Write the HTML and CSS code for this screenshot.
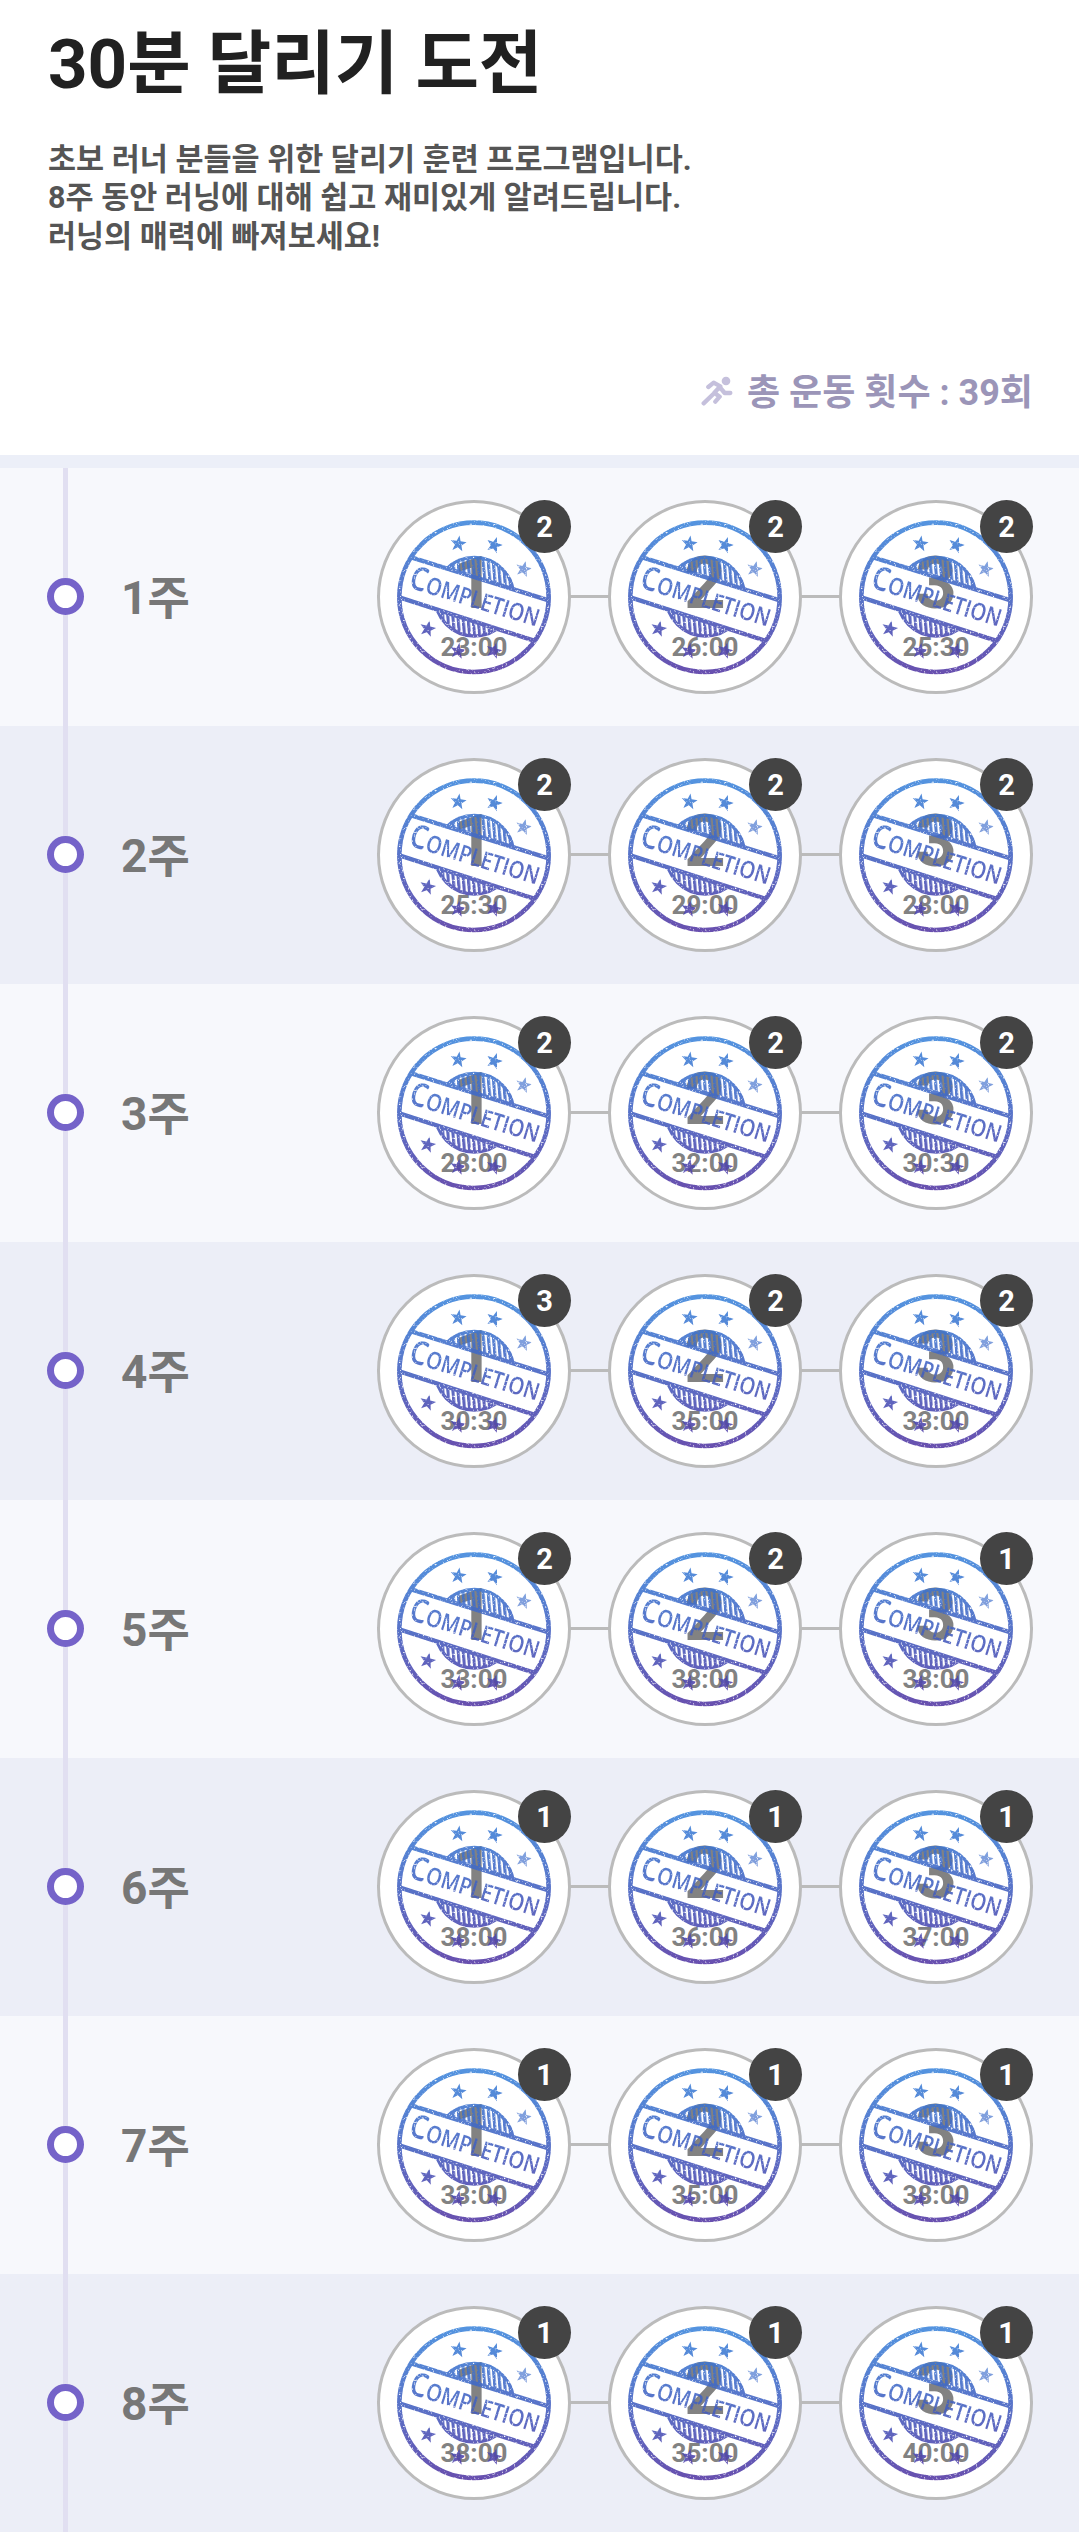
FILE: index.html
```
<!DOCTYPE html>
<html lang="ko">
<head>
    <meta charset="UTF-8">
    <meta name="viewport" content="width=device-width, initial-scale=1.0">
    <title>30분 달리기 도전</title>
    <link rel="stylesheet" href="styles.css">
</head>
<body>

    <svg class="defs" width="0" height="0" aria-hidden="true">
        <defs>
            <linearGradient id="ink" gradientUnits="userSpaceOnUse" x1="0" y1="92" x2="0" y2="552">
                <stop offset="0" stop-color="#3c86dc"/>
                <stop offset="0.45" stop-color="#4064c4"/>
                <stop offset="1" stop-color="#5438a4"/>
            </linearGradient>
            <pattern id="hatch" width="15" height="40" patternUnits="userSpaceOnUse" patternTransform="rotate(-5)">
                <rect width="9" height="40" fill="#fff"/>
            </pattern>
            <clipPath id="outsideBand">
                <path d="M0 0H660V369L130 203L0 162ZM0 294L88 322L660 507V660H0Z"/>
            </clipPath>
            <filter id="worn" x="0" y="0" width="100%" height="100%">
                <feTurbulence type="fractalNoise" baseFrequency="0.16" numOctaves="3" seed="8" result="noise"/>
                <feColorMatrix in="noise" type="matrix" values="0 0 0 0 0  0 0 0 0 0  0 0 0 0 0  0 0 0 4 -0.6" result="spots"/>
                <feComposite in="SourceGraphic" in2="spots" operator="in"/>
            </filter>
            <polygon id="star" points="0,-25 6,-8 24,-8 10,4 15,21 0,11 -15,21 -10,4 -24,-8 -6,-8"/>
            <mask id="stampShape" maskUnits="userSpaceOnUse" x="21" y="30" width="582" height="582">
                <g fill="#fff">
                    <circle cx="312" cy="322" r="224" fill="none" stroke="#fff" stroke-width="14"/>
                    <g clip-path="url(#outsideBand)">
                        <circle cx="313" cy="320" r="118" fill="url(#hatch)"/>
                        <circle cx="313" cy="320" r="118" fill="none" stroke="#fff" stroke-width="10"/>
                    </g>
                    <path d="M126 203L536 331M88 322L492 452" fill="none" stroke="#fff" stroke-width="13"/>
                    <use href="#star" transform="translate(265 161) rotate(8)"/>
                    <use href="#star" transform="translate(373 165) rotate(18)"/>
                    <use href="#star" transform="translate(461 237) rotate(14)" opacity="0.75"/>
                    <use href="#star" transform="translate(173 416) rotate(14)"/>
                    <use href="#star" transform="translate(264 483) rotate(10)"/>
                    <use href="#star" transform="translate(372 482) rotate(16)"/>
                    <text class="stamp-text" transform="translate(113 292) rotate(17)" textLength="404" lengthAdjust="spacingAndGlyphs"><tspan font-size="98">C</tspan><tspan font-size="72">OMPLETION</tspan></text>
                </g>
            </mask>
            <symbol id="stamp" viewBox="21 30 582 582">
                <g filter="url(#worn)">
                    <rect x="21" y="30" width="582" height="582" fill="url(#ink)" mask="url(#stampShape)"/>
                </g>
            </symbol>
        </defs>
    </svg>

    <header>
        <h1>30분 달리기 도전</h1>
        <p>초보 러너 분들을 위한 달리기 훈련 프로그램입니다.<br>8주 동안 러닝에 대해 쉽고 재미있게 알려드립니다.<br>러닝의 매력에 빠져보세요!</p>
        <div class="total">
            <svg class="runner" viewBox="0 0 96 90" aria-hidden="true">
                <circle cx="75" cy="15" r="13"/>
                <path d="M22 33L38 20L58 31L40 50L56 62L43 77M57 34L71 51H88M37 54L8 82"/>
            </svg>
            <span>총 운동 횟수 : 39회</span>
        </div>
    </header>

    <main id="weeks"></main>

    <script>
        // [time, run count] for each day
        const weeks = [
            [['23:00', 2], ['26:00', 2], ['25:30', 2]],
            [['25:30', 2], ['29:00', 2], ['28:00', 2]],
            [['28:00', 2], ['32:00', 2], ['30:30', 2]],
            [['30:30', 3], ['35:00', 2], ['33:00', 2]],
            [['33:00', 2], ['38:00', 2], ['38:00', 1]],
            [['38:00', 1], ['36:00', 1], ['37:00', 1]],
            [['33:00', 1], ['35:00', 1], ['38:00', 1]],
            [['38:00', 1], ['35:00', 1], ['40:00', 1]]
        ];

        document.getElementById('weeks').innerHTML = weeks.map((days, i) => `
            <section class="week">
                <div class="rail"><span class="dot"></span></div>
                <h2>${i + 1}주</h2>
                <div class="days">
                    ${days.map(([time, count], d) => `
                        <div class="day">
                            <span class="number">${d + 1}</span>
                            <span class="time">${time}</span>
                            <svg class="stamp"><use href="#stamp"/></svg>
                            <span class="badge">${count}</span>
                        </div>`).join('')}
                </div>
            </section>`).join('');
    </script>

</body>
</html>
```
FILE: styles.css
```
* {
    box-sizing: border-box;
}

body {
    margin: 0;
    background: #fff;
    font-family: Roboto, "Noto Sans CJK KR", sans-serif;
    font-weight: bold;
}

.defs {
    position: absolute;
}

header {
    height: 468px;
    padding: 23px 46px 0 48px;
    border-bottom: 13px solid #eceff8;
}

h1 {
    margin: 0;
    color: #212121;
    font-size: 69px;
    line-height: 84px;
}

p {
    margin: 34px 0 0;
    color: #555;
    font-size: 30.5px;
    line-height: 38.3px;
}

.total {
    display: flex;
    justify-content: flex-end;
    align-items: center;
    gap: 14px;
    margin-top: 116px;
    color: #9b95b8;
    font-size: 36px;
    line-height: 42px;
}

.runner {
    width: 32px;
    height: 30px;
    margin-top: -4px;
    fill: #c5c0dc;
}

.runner path {
    fill: none;
    stroke: #c5c0dc;
    stroke-width: 13;
    stroke-linecap: round;
    stroke-linejoin: round;
}

.week {
    display: flex;
    align-items: center;
    height: 258px;
    padding: 0 46px 0 47px;
    background: #f7f8fc;
}

.week:nth-child(even) {
    background: #eceef7;
}

.rail {
    display: flex;
    align-items: center;
    width: 37px;
    height: 100%;
    background: linear-gradient(#e1dff1, #e1dff1) 16px 0 / 5px 100% no-repeat;
}

.dot {
    width: 37px;
    height: 37px;
    margin-top: -1px;
    border: 7px solid #7563c9;
    border-radius: 50%;
    background: #fff;
}

h2 {
    margin: 2px 0 0 37px;
    color: #777;
    font-size: 46px;
    line-height: 60px;
}

.days {
    display: flex;
    gap: 37px;
    margin-left: auto;
    background: linear-gradient(#bbb, #bbb) 0 95px / 100% 3px no-repeat;
}

.day {
    position: relative;
    display: flex;
    flex-direction: column;
    align-items: center;
    width: 194px;
    height: 194px;
    padding-top: 40px;
    border: 3px solid #bbb;
    border-radius: 50%;
    background: #fff;
    color: #828282;
}

.number {
    font-size: 73px;
    line-height: 80px;
}

.time {
    margin-top: 9px;
    font-size: 26px;
    line-height: 30px;
}

.stamp {
    position: absolute;
    top: -3px;
    left: -3px;
    width: 194px;
    height: 194px;
    opacity: 0.88;
}

.stamp-text {
    font-family: "Open Sans", sans-serif;
    font-weight: 600;
}

.badge {
    position: absolute;
    top: -3px;
    right: -3px;
    width: 53px;
    height: 53px;
    border-radius: 50%;
    background: #444;
    color: #fff;
    font-size: 29px;
    line-height: 55px;
    text-align: center;
}
```
